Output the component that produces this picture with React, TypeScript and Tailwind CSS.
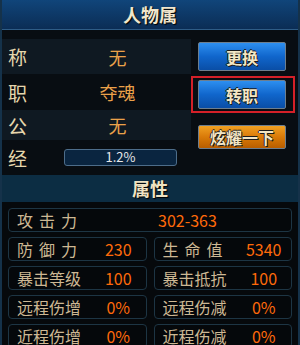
import React from "react";

const font = { fontFamily: '"Noto Sans CJK SC", "Noto Sans", sans-serif' };

const InfoRow = ({ label, value, band, h }: { label: string; value: React.ReactNode; band?: boolean; h: string }) => (
  <div className={`flex items-center ${h} ${band ? "bg-[#0f1922]" : ""}`}>
    <span className="w-[56px] pl-[6px] text-[19px] leading-none text-[#e6d7ad]">{label}</span>
    <div className="flex-1 flex justify-center pr-[14px] text-[18px] leading-none text-[#eba14a]">{value}</div>
  </div>
);

const btnText = "text-[16px] font-bold text-[#f3e6c4] [text-shadow:1px_1px_0_#1b1b1b,-1px_0_0_#1b1b1b,0_-1px_0_#1b1b1b]";

const GameButton = ({ text }: { text: string }) => (
  <div
    className={`w-[88px] h-[29px] flex items-center justify-center rounded-[2px] border border-[#6d7e8e] bg-gradient-to-b from-[#2d8ff0] via-[#1066cc] to-[#0a4ea6] ${btnText}`}
  >
    {text}
  </div>
);

const StatBox = ({ label, value, spaced }: { label: string; value: string; spaced?: boolean }) => (
  <div className="flex-1 h-[24px] flex items-center rounded-[4px] border border-[#1d3544] bg-[#05080b]">
    <span className={`w-[88px] pl-[8px] text-[16px] leading-none text-[#cdb894] ${spaced ? "tracking-[6px]" : ""}`}>{label}</span>
    <span className="flex-1 text-center pr-[6px] text-[16px] leading-none text-[#ff6a0a]">{value}</span>
  </div>
);

export default function App() {
  return (
    <div style={font} className="w-[300px] h-[345px] overflow-hidden bg-[#080d12] border-x-2 border-[#15324a] flex flex-col">
      <div className="h-[30px] shrink-0 bg-gradient-to-b from-[#10457a] to-[#0b2d55] border-b border-[#2e5c86] flex items-center justify-center">
        <span className="text-[18px] font-bold text-[#f0e6cc] [text-shadow:1px_1px_1px_#000]">人物属</span>
      </div>
      <div className="flex h-[145px] shrink-0">
        <div className="w-[189px] flex flex-col pt-[9px]">
          <InfoRow label="称" value="无" band h="h-[35px]" />
          <InfoRow label="职" value="夺魂" h="h-[36px]" />
          <InfoRow label="公" value="无" band h="h-[30px]" />
          <div className="flex items-center h-[34px]">
            <span className="w-[56px] pl-[6px] text-[19px] leading-none text-[#e6d7ad]">经</span>
            <div className="w-[113px] h-[17px] ml-[6px] rounded-[3px] border border-[#4d6d8a] bg-[#0a2540] flex items-center justify-center text-[13px] text-[#e8e8e8]">
              1.2%
            </div>
          </div>
        </div>
        <div className="flex-1 flex flex-col pt-[12px]">
          <div className="ml-[7px]">
            <GameButton text="更换" />
          </div>
          <div className="mt-[5px] w-[104px] pl-[5px] py-[2px] border-2 border-[#d42028]">
            <GameButton text="转职" />
          </div>
          <div className="mt-[12px] ml-[7px]">
            <div
              className={`w-[88px] h-[24px] flex items-center justify-center rounded-[2px] border border-[#6d7e8e] bg-gradient-to-b from-[#f0a020] via-[#d97a08] to-[#b85e00] ${btnText}`}
            >
              炫耀一下
            </div>
          </div>
        </div>
      </div>
      <div className="h-[27px] shrink-0 bg-[#0c2d43] flex items-center justify-center">
        <span className="text-[18px] font-bold text-[#efe3c2] [text-shadow:1px_1px_1px_#000]">属性</span>
      </div>
      <div className="flex-1 flex flex-col gap-[5px] px-[6px] pt-[6px] bg-[#06090c] border-b-2 border-[#1c3a4c]">
        <div className="h-[24px] shrink-0 flex items-center rounded-[4px] border border-[#1d3544] bg-[#05080b]">
          <span className="w-[149px] pl-[8px] text-[16px] leading-none text-[#cdb894] tracking-[6px]">攻击力</span>
          <span className="text-[16px] leading-none text-[#ff6a0a]">302-363</span>
        </div>
        <div className="flex gap-[7px] shrink-0">
          <StatBox label="防御力" value="230" spaced />
          <StatBox label="生命值" value="5340" spaced />
        </div>
        <div className="flex gap-[7px] shrink-0">
          <StatBox label="暴击等级" value="100" />
          <StatBox label="暴击抵抗" value="100" />
        </div>
        <div className="flex gap-[7px] shrink-0">
          <StatBox label="远程伤增" value="0%" />
          <StatBox label="远程伤减" value="0%" />
        </div>
        <div className="flex gap-[7px] shrink-0">
          <StatBox label="近程伤增" value="0%" />
          <StatBox label="近程伤减" value="0%" />
        </div>
      </div>
    </div>
  );
}
